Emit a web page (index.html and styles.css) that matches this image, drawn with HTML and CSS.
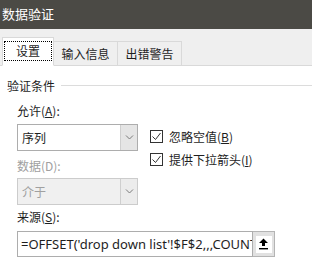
FILE: index.html
```html
<!DOCTYPE html>
<html lang="zh-CN">
<head>
<meta charset="UTF-8">
<title>数据验证</title>
<link rel="stylesheet" href="styles.css">
</head>
<body>
<div class="dialog">
  <div class="titlebar">数据验证</div>

  <div class="tabs">
    <div class="tab active"><span class="focus">设置</span></div>
    <div class="tab">输入信息</div>
    <div class="tab">出错警告</div>
  </div>

  <div class="content">
    <div class="group-title"><span>验证条件</span><i class="rule"></i></div>

    <div class="form">
      <div class="cols">
        <div class="left">
          <div class="label">允许(<u>A</u>):</div>
          <div class="select">
            <span class="value">序列</span>
            <span class="drop"><svg width="9" height="5" viewBox="0 0 9 5"><path d="M1 0.5 L4.5 4 L8 0.5" fill="none" stroke="#7a7a7a" stroke-width="1"/></svg></span>
          </div>
          <div class="label disabled">数据(D):</div>
          <div class="select off">
            <span class="value">介于</span>
            <span class="drop"><svg width="9" height="5" viewBox="0 0 9 5"><path d="M1 0.5 L4.5 4 L8 0.5" fill="none" stroke="#7a7a7a" stroke-width="1"/></svg></span>
          </div>
        </div>
        <div class="right">
          <label class="check"><span class="box"><svg width="11" height="11" viewBox="0 0 11 11"><path d="M1.5 5.5 L4.5 8.5 L9.5 2" fill="none" stroke="#333" stroke-width="1"/></svg></span><span>忽略空值(<u>B</u>)</span></label>
          <label class="check"><span class="box"><svg width="11" height="11" viewBox="0 0 11 11"><path d="M1.5 5.5 L4.5 8.5 L9.5 2" fill="none" stroke="#333" stroke-width="1"/></svg></span><span>提供下拉箭头(<u>I</u>)</span></label>
        </div>
      </div>

      <div class="label src">来源(<u>S</u>):</div>
      <div class="source">
        <div class="input">=OFFSET('drop down list'!$F$2,,,COUNT</div>
        <div class="pick"><span class="inner"><svg width="11" height="12" viewBox="0 0 11 12"><path d="M5.5 0.5 L10 5 L7 5 L7 8 L4 8 L4 5 L1 5 Z" fill="#000"/><rect x="1" y="10" width="9" height="1.4" fill="#000"/></svg></span></div>
      </div>
    </div>
  </div>
</div>
</body>
</html>
```

FILE: styles.css
```css
*{box-sizing:border-box;margin:0;padding:0}
body{
  width:312px;height:272px;overflow:hidden;
  background:#fff;
  font-family:"Noto Sans CJK SC",sans-serif;
  font-size:12px;color:#1e1e1e;
}

/* TITLE */
.titlebar{
  height:29px;line-height:28px;
  padding-left:2px;
  background:#4b4a45;color:#fff;
  font-size:13px;
}

/* TABS */
.tabs{
  height:37px;
  display:flex;align-items:flex-end;
  padding-left:2px;
  background:#efefef;
  border-bottom:1px solid #d9d9d9;
}
.tab{
  height:25px;margin-bottom:-1px;
  width:64px;
  display:flex;align-items:center;justify-content:center;
  white-space:nowrap;
  border:1px solid #d9d9d9;border-left:none;
  background:#efefef;
}
.tab.active{
  height:29px;width:52px;padding:0 1px;
  border-left:1px solid #d9d9d9;
  border-bottom-color:#fff;
  background:#fff;
  position:relative;z-index:1;
}
.tab .focus{
  width:48px;height:20px;
  display:flex;align-items:center;justify-content:center;
  border:1px dotted #000;
  margin-top:-2px;
}

/* CONTENT */
.content{padding:11px 0 0 7px}
.group-title{display:flex;align-items:center;height:16px}
.group-title .rule{flex:1;height:1px;background:#dcdcdc;margin-left:6px}

.form{padding-left:10px}
.cols{display:flex}
.left{width:121px}
.label{height:16px;line-height:16px;margin-top:10px}
.label.disabled{color:#a0a0a0;margin-top:7px}
.label.src{margin-top:4px}

.select{
  height:27px;margin-top:5px;
  display:flex;
  border:1px solid #adadad;
  background:#fff;
}
.select.off{margin-top:4px;background:#f0f0f0;border-color:#cccccc;color:#a0a0a0}
.select .value{flex:1;display:flex;align-items:center;padding-left:4px}
.select .drop{
  width:17px;
  display:flex;align-items:center;justify-content:center;
  background:#e5e5e5;border-left:1px solid #cfcfcf;
}
.select.off .drop{background:#ececec}

.right{padding:37px 0 0 12px;display:flex;flex-direction:column;gap:10px}
.check{display:flex;align-items:center;height:13px;gap:6px;white-space:nowrap}
.check .box{
  width:13px;height:13px;
  border:1px solid #333;background:#fff;
  display:flex;align-items:center;justify-content:center;
}

/* SOURCE */
.source{display:flex;margin-top:6px;height:26px}
.input{
  width:236px;
  border:1px solid #adadad;
  padding-left:3px;
  font-family:"Noto Sans",sans-serif;font-size:13px;
  line-height:24px;white-space:nowrap;overflow:hidden;
}
.pick{
  width:22px;
  background:#e1e1e1;border:1px solid #b4b4b4;border-left:none;
  display:flex;align-items:center;justify-content:center;
}
.pick .inner{
  width:16px;height:17px;background:#fff;
  display:flex;align-items:center;justify-content:center;
}
```
